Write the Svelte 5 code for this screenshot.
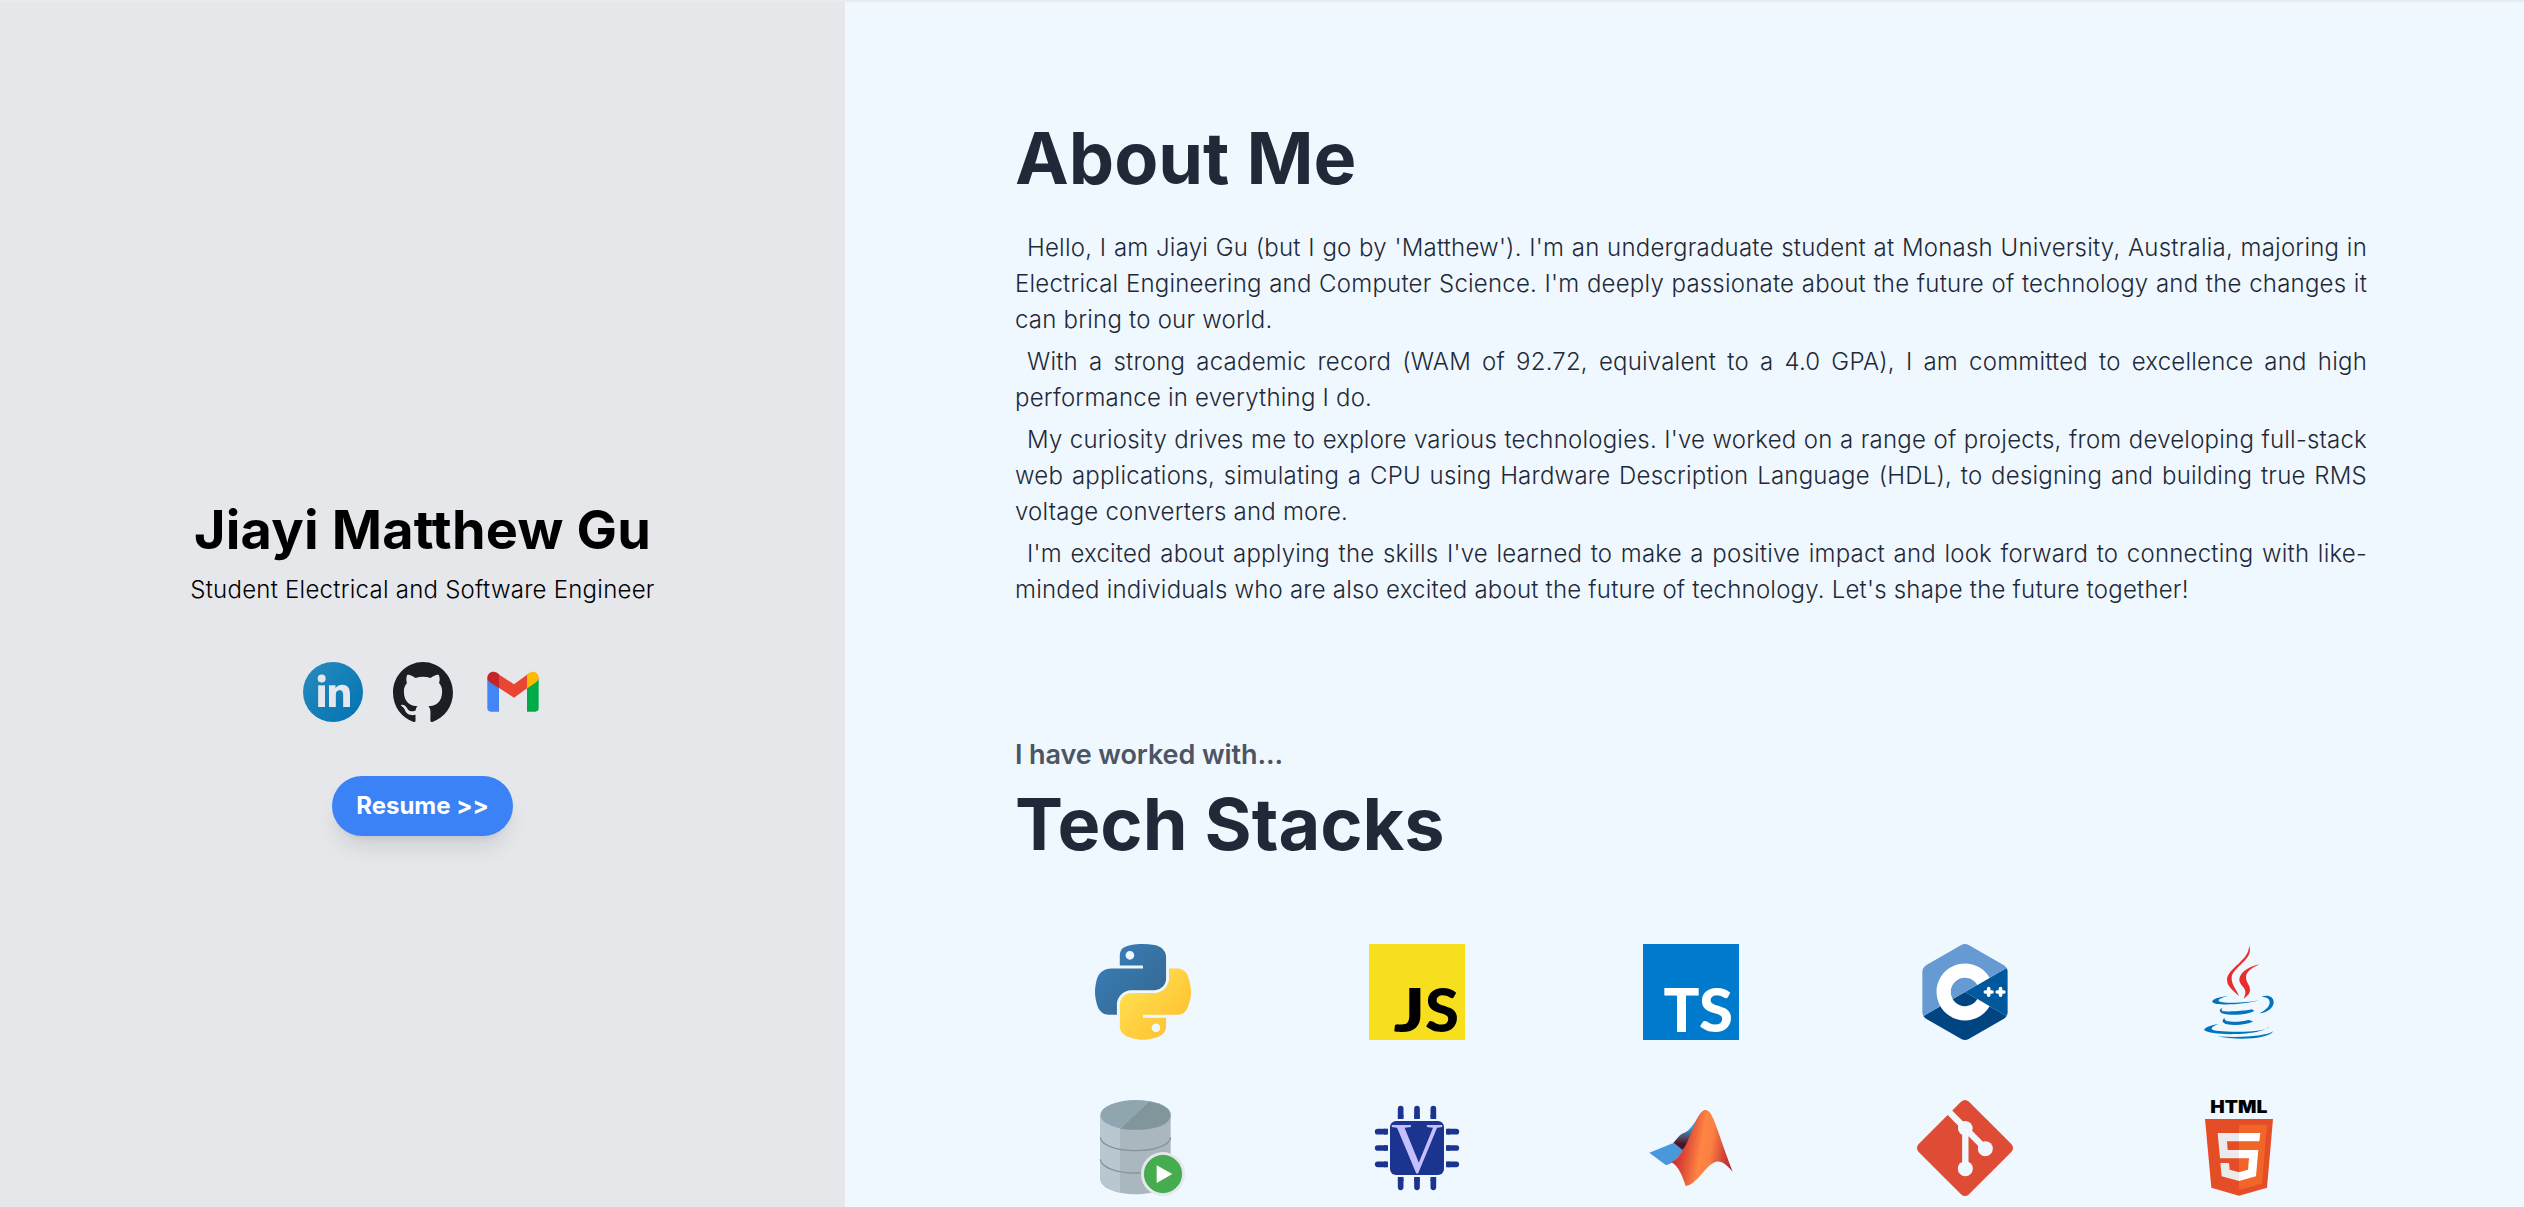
<script>
  const paragraphs = [
    "Hello, I am Jiayi Gu (but I go by 'Matthew'). I'm an undergraduate student at Monash University, Australia, majoring in Electrical Engineering and Computer Science. I'm deeply passionate about the future of technology and the changes it can bring to our world.",
    "With a strong academic record (WAM of 92.72, equivalent to a 4.0 GPA), I am committed to excellence and high performance in everything I do.",
    "My curiosity drives me to explore various technologies. I've worked on a range of projects, from developing full-stack web applications, simulating a CPU using Hardware Description Language (HDL), to designing and building true RMS voltage converters and more.",
    "I'm excited about applying the skills I've learned to make a positive impact and look forward to connecting with like-minded individuals who are also excited about the future of technology. Let's shape the future together!"
  ];
</script>

<div class="page">
  <aside class="profile">
    <h1>Jiayi Matthew Gu</h1>
    <p class="role">Student Electrical and Software Engineer</p>

    <nav class="socials">
      <!-- LinkedIn -->
      <svg viewBox="429 576 180 180">
        <defs>
          <linearGradient id="li" x1="0" y1="0" x2="1" y2="1">
            <stop offset="0.1" stop-color="#2489be" />
            <stop offset="0.9" stop-color="#0575b3" />
          </linearGradient>
        </defs>
        <circle cx="519" cy="666" r="90" fill="url(#li)" />
        <g fill="#e5e7eb">
          <circle cx="485" cy="625.500" r="12" />
          <path d="M474.500 646h20.500v65h-20.500z" />
          <path d="M507 646h19.500v9c4-7 11-11 20-11c18 0 23.500 12 23.500 29v38h-20.500v-34c0-8-1-16-10.500-16s-11.500 7-11.500 15v35H507z" />
        </g>
      </svg>
      <!-- GitHub -->
      <svg viewBox="0 0 97.7 96" preserveAspectRatio="none">
        <path fill="#1b1f23" d="M48.854 0C21.839 0 0 22 0 49.217c0 21.756 13.993 40.172 33.405 46.69 2.427.49 3.316-1.059 3.316-2.362 0-1.141-.08-5.052-.08-9.127-13.59 2.934-16.42-5.867-16.42-5.867-2.184-5.704-5.42-7.17-5.42-7.17-4.448-3.015.324-3.015.324-3.015 4.934.326 7.523 5.052 7.523 5.052 4.367 7.496 11.404 5.378 14.235 4.074.404-3.178 1.699-5.378 3.074-6.6-10.839-1.141-22.243-5.378-22.243-24.283 0-5.378 1.94-9.778 5.014-13.2-.485-1.222-2.184-6.275.486-13.038 0 0 4.125-1.304 13.426 5.052a46.97 46.97 0 0 1 12.214-1.63c4.125 0 8.33.571 12.213 1.63 9.302-6.356 13.427-5.052 13.427-5.052 2.67 6.763.97 11.816.485 13.038 3.155 3.422 5.015 7.822 5.015 13.2 0 18.905-11.404 23.06-22.324 24.283 1.78 1.548 3.316 4.481 3.316 9.126 0 6.6-.08 11.897-.08 13.526 0 1.304.89 2.853 3.316 2.364 19.412-6.52 33.405-24.935 33.405-46.691C97.707 22 75.788 0 48.854 0z" />
      </svg>
      <!-- Gmail -->
      <svg viewBox="969 576 180 180">
        <path fill="#4285f4" d="M982 624l35 30v71h-25c-6 0-10-4-10-10z" />
        <path fill="#00ac47" d="M1136 624l-35 30v71h25c6 0 10-4 10-10z" />
        <path fill="#ea4435" d="M1009 608l53 35 46-34-7 46-39 28-45-29-12-12z" />
        <path fill="#ffba00" d="M1101 615c7-7 12-9.500 18-9.500 10 0 17 8 17 18 0 5-2 9-8 13l-27 19z" />
        <path fill="#c52528" d="M1017 613c-6-5-11-7.500-17-7.500-10 0-18 8-18 18 0 5 2 9 8 13l27 18z" />
      </svg>
    </nav>

    <button class="resume">Resume &gt;&gt;</button>
  </aside>

  <main class="content">
    <section class="about">
      <h2>About Me</h2>
      <div class="bio">
        {#each paragraphs as text}
          <p>{text}</p>
        {/each}
      </div>
    </section>

    <section class="stacks">
      <p class="eyebrow">I have worked with...</p>
      <h2>Tech Stacks</h2>

      <div class="grid">
        <!-- Python -->
        <svg viewBox="12.8 1.98 102.4 103.8" preserveAspectRatio="none">
          <defs>
            <linearGradient id="pyb" x1="0" y1="0" x2="1" y2="1">
              <stop offset="0.1" stop-color="#387eb8" />
              <stop offset="0.85" stop-color="#366994" />
            </linearGradient>
            <linearGradient id="pyy" x1="0" y1="0" x2="1" y2="1">
              <stop offset="0.15" stop-color="#ffe052" />
              <stop offset="0.8" stop-color="#ffc331" />
            </linearGradient>
          </defs>
          <path fill="url(#pyb)" d="M63.391 1.988c-4.222.02-8.252.379-11.8 1.007-10.45 1.846-12.346 5.71-12.346 12.837v9.411h24.693v3.137H29.977c-7.176 0-13.46 4.313-15.426 12.521-2.268 9.405-2.368 15.275 0 25.096 1.755 7.311 5.947 12.519 13.124 12.519h8.491V67.234c0-8.151 7.051-15.34 15.426-15.34h24.665c6.866 0 12.346-5.654 12.346-12.548V15.833c0-6.693-5.646-11.72-12.346-12.837-4.244-.706-8.645-1.027-12.866-1.008zM50.037 9.557c2.55 0 4.634 2.117 4.634 4.721 0 2.593-2.083 4.69-4.634 4.69-2.56 0-4.633-2.097-4.633-4.69-.001-2.604 2.073-4.721 4.633-4.721z" />
          <path fill="url(#pyy)" d="M91.682 28.38v10.966c0 8.5-7.208 15.655-15.426 15.655H51.591c-6.756 0-12.346 5.783-12.346 12.549v23.515c0 6.691 5.818 10.628 12.346 12.547 7.816 2.297 15.312 2.713 24.665 0 6.216-1.801 12.346-5.423 12.346-12.547v-9.412H63.938v-3.138h37.012c7.176 0 9.852-5.005 12.348-12.519 2.578-7.735 2.467-15.174 0-25.096-1.774-7.145-5.161-12.521-12.348-12.521h-9.268zM77.809 87.927c2.561 0 4.634 2.097 4.634 4.692 0 2.602-2.074 4.719-4.634 4.719-2.55 0-4.633-2.117-4.633-4.719 0-2.595 2.083-4.692 4.633-4.692z" />
        </svg>

        <!-- JavaScript -->
        <svg viewBox="0 0 96 96">
          <rect width="96" height="96" fill="#f7df1e" />
          <text class="mark" x="24.500" y="88" textLength="32" lengthAdjust="spacingAndGlyphs">J</text>
          <text class="mark" x="56" y="88" textLength="34" lengthAdjust="spacingAndGlyphs">S</text>
        </svg>

        <!-- TypeScript -->
        <svg viewBox="0 0 96 96">
          <rect width="96" height="96" fill="#007acc" />
          <text class="mark light" x="20.500" y="88" textLength="36" lengthAdjust="spacingAndGlyphs">T</text>
          <text class="mark light" x="56" y="88" textLength="34" lengthAdjust="spacingAndGlyphs">S</text>
        </svg>

        <!-- C++ -->
        <svg viewBox="0 0 306 344.35">
          <path fill="#00599c" d="M302.107 258.262c2.401-4.159 3.893-8.845 3.893-13.053V99.14c0-4.208-1.49-8.893-3.892-13.052L153 172.175l149.107 86.087z" />
          <path fill="#004482" d="M166.25 341.193l126.5-73.034c3.644-2.104 6.956-5.737 9.357-9.897L153 172.175 3.893 258.263c2.401 4.159 5.714 7.793 9.357 9.896l126.5 73.034c7.287 4.208 19.213 4.208 26.5 0z" />
          <path fill="#659ad2" d="M302.108 86.087c-2.402-4.16-5.715-7.793-9.358-9.897L166.25 3.156c-7.287-4.208-19.213-4.208-26.5 0L13.25 76.19C5.962 80.397 0 90.725 0 99.14v146.069c0 4.208 1.491 8.894 3.893 13.053L153 172.175l149.108-86.088z" />
          <path fill="#fff" d="M153 274.175c-56.243 0-102-45.757-102-102s45.757-102 102-102c36.292 0 70.139 19.53 88.331 50.968l-44.143 25.544c-9.105-15.736-26.038-25.512-44.188-25.512-28.122 0-51 22.878-51 51 0 28.121 22.878 51 51 51 18.152 0 35.085-9.776 44.191-25.515l44.143 25.543c-18.192 31.441-52.04 50.972-88.334 50.972z" />
          <path stroke="#fff" stroke-width="13" stroke-linecap="round" d="M226 172h24M238 160v24M268.500 172h24M280.500 160v24" />
        </svg>

        <!-- Java -->
        <svg viewBox="93 42 288 288">
          <g fill="#e92d2e">
            <path d="M267 46C285 90 215 110 215 145C215 165 230 180 237 198C215 180 200 165 201 148C203 115 270 90 267 46z" />
            <path d="M300 103C270 115 258 128 258 142C258 158 270 165 270 180C270 192 260 200 251 206C258 190 258 182 250 172C242 162 237 155 238 147C241 125 270 108 300 103z" />
          </g>
          <g fill="#0074bd">
            <path d="M203 199C175 201 155 208 157 216C162 228 250 225 297 211C260 219 180 222 176 212C175 207 190 202 203 199z" />
            <path d="M305 200C325 193 342 202 341 218C339 236 320 247 299 250C318 240 330 228 329 216C328 204 318 201 305 200z" />
            <path d="M187 234C175 238 178 248 190 251C220 258 265 253 283 243L276 238C250 244 200 246 187 243C184 240 184 237 187 234z" />
            <path d="M195 264C183 270 187 279 200 283C225 288 260 285 280 274L265 270C245 276 215 277 200 273C195 270 192 268 195 264z" />
            <path d="M175 283C150 285 130 295 133 301C150 318 310 318 328 288C325 300 290 304 250 305C200 306 155 303 155 297C155 291 165 286 175 283z" />
            <path d="M172 319C230 332 325 328 340 304C320 318 240 325 172 319z" />
          </g>
        </svg>

        <!-- SQL database -->
        <svg viewBox="45 510 288 288">
          <path fill="#abb7bf" d="M61 555v193c0 25 47 45 105.500 45s105.500-20 105.500-45V555z" />
          <path fill="#b9c7d0" d="M61 555v193c0 16 24 31 59 38.500V560z" />
          <g fill="none" stroke="#80969b" stroke-width="4">
            <path d="M61 622c2 23 47 40 105.500 40s103.500-17 105.500-40" />
            <path d="M61 688c2 23 47 41 105.500 41s103.500-18 105.500-41" />
          </g>
          <ellipse cx="166.500" cy="555" rx="105.500" ry="45" fill="#8fa5b0" />
          <path fill="#80969b" stroke="#a3b4bb" stroke-width="1.500" d="M207 514L120 596C165 606 272 601 272 555C272 536 246 520 207 514z" />
          <circle cx="249" cy="732" r="66" fill="#e4e8ec" />
          <circle cx="249" cy="732" r="56" fill="#46ad4f" stroke="#2f9d43" stroke-width="2" />
          <path fill="#fff" d="M230 706l47 26-47 27z" />
        </svg>

        <!-- Verilog -->
        <svg viewBox="867 510 288 288">
          <g stroke="#1a348f" stroke-width="17" stroke-linecap="round">
            <path d="M962 536v22M1011 536v22M1060 536v22M962 750v22M1011 750v22M1060 750v22" />
            <path d="M893 605h22M893 654h22M893 703h22M1107 605h22M1107 654h22M1107 703h22" />
          </g>
          <path fill="#1a348f" d="M953.500 555h17v12h-17zM1002.500 555h17v12h-17zM1051.500 555h17v12h-17zM953.500 741h17v12h-17zM1002.500 741h17v12h-17zM1051.500 741h17v12h-17zM912 596.500h12v17h-12zM912 645.500h12v17h-12zM912 694.500h12v17h-12zM1098 596.500h12v17h-12zM1098 645.500h12v17h-12zM1098 694.500h12v17h-12z" />
          <rect x="930" y="573" width="162" height="162" rx="18" fill="#1a348f" />
          <text class="chip" x="933" y="725" textLength="156" lengthAdjust="spacingAndGlyphs">V</text>
        </svg>

        <!-- MATLAB -->
        <svg viewBox="69 510 288 288">
          <defs>
            <linearGradient id="mlo" x1="153" x2="338" y1="690" y2="720" gradientUnits="userSpaceOnUse">
              <stop offset="0" stop-color="#c9272f" />
              <stop offset="0.2" stop-color="#de4a35" />
              <stop offset="0.45" stop-color="#ff8543" />
              <stop offset="0.6" stop-color="#fb8042" />
              <stop offset="0.8" stop-color="#d84a35" />
              <stop offset="1" stop-color="#a81f30" />
            </linearGradient>
            <linearGradient id="mld" x1="0" x2="0" y1="560" y2="656" gradientUnits="userSpaceOnUse">
              <stop offset="0.35" stop-color="#25a0e0" />
              <stop offset="0.6" stop-color="#54566f" />
              <stop offset="0.85" stop-color="#4a1426" />
            </linearGradient>
          </defs>
          <path fill="#4799dc" d="M88 668L160 639L190 660C178 678 168 690 155 698Q145 705 137 705z" />
          <path fill="url(#mld)" d="M160 638C170 628 176 616 186 611C210 606 225 575 240 553C244 546 249 541 257 540L222 620L188 660z" />
          <path fill="url(#mlo)" d="M257 540C279 540 290 600 338 725C320 704 304 691 288 695C258 702 232 764 197 768C189 742 174 704 153 697C168 692 180 676 190 658C216 618 228 546 257 540z" />
        </svg>

        <!-- Git -->
        <svg viewBox="891 510 288 288">
          <path fill="#de4c36" d="M1023 515.500q12-11 24 0L1174 642q10.500 12 0 24L1047 792.500q-12 11-24 0L896 666q-10.500-12 0-24z" />
          <g fill="none" stroke="#f0f8ff" stroke-width="19">
            <path d="M970 528L1096 656M1036 595V716" />
          </g>
          <g fill="#f0f8ff">
            <circle cx="1036" cy="595" r="22" />
            <circle cx="1096" cy="656" r="22.500" />
            <circle cx="1036" cy="716" r="22.500" />
          </g>
        </svg>

        <!-- HTML5 -->
        <svg viewBox="93 510 288 288">
          <text class="html" x="151" y="549" textLength="171" lengthAdjust="spacingAndGlyphs">HTML</text>
          <path fill="#e44d26" d="M135 567H339L321 773L237 797L154 773z" />
          <path fill="#f16529" d="M237 584H321L306 761L237 780z" />
          <path fill="#ebebeb" d="M173 609H237V634H201L203 660H237V685H180zM181 699H207L209 719L237 727V753L185 739z" />
          <path fill="#fff" d="M237 609H301L298 634H237zM237 660H295L288 739L237 753V727L264 719L267 685H237z" />
        </svg>
      </div>
    </section>
  </main>
</div>

<style>
  :global(body) {
    margin: 0;
    overflow: hidden;
  }

  .page {
    box-sizing: border-box;
    display: flex;
    height: 1207px;
    overflow: hidden;
    border-top: 2px solid #e9ebef;
    background: #f0f8ff;
    font-family: Inter, "Liberation Sans", sans-serif;
  }

  h1,
  h2,
  p {
    margin: 0;
  }

  .profile {
    box-sizing: border-box;
    flex: none;
    display: flex;
    flex-direction: column;
    align-items: center;
    width: 845px;
    padding-top: 498px;
    background: #e5e7eb;
    color: #000;
  }

  h1 {
    font-size: 54px;
    line-height: 60px;
    font-weight: 700;
    letter-spacing: 0.2px;
  }

  .role {
    margin-top: 12px;
    font-size: 24px;
    line-height: 36px;
    font-weight: 300;
    letter-spacing: 0.24px;
  }

  .socials {
    display: flex;
    gap: 30px;
    margin-top: 54px;
  }

  .socials svg {
    width: 60px;
    height: 60px;
  }

  .resume {
    width: 181px;
    height: 60px;
    margin-top: 54px;
    padding: 0;
    border: 0;
    border-radius: 30px;
    background: #3b82f6;
    color: #fff;
    font: 700 24px/36px Inter, "Liberation Sans", sans-serif;
    box-shadow:
      0 15px 22.5px -4.5px rgb(0 0 0 / 0.1),
      0 6px 9px -6px rgb(0 0 0 / 0.1);
  }

  .content {
    flex: none;
    width: 1352px;
    padding: 120px 0 0 170px;
    color: #1f2937;
  }

  h2 {
    font-size: 72px;
    line-height: 72px;
    font-weight: 700;
  }

  .bio {
    display: flex;
    flex-direction: column;
    gap: 6px;
    margin-top: 36px;
    font-size: 24px;
    line-height: 36px;
    font-weight: 300;
    letter-spacing: 0.21px;
    text-align: justify;
  }

  .bio p {
    text-indent: 12px;
  }

  .stacks {
    margin-top: 126px;
  }

  .eyebrow {
    margin-bottom: 12px;
    color: #4b5563;
    font-size: 27px;
    line-height: 42px;
    font-weight: 600;
    letter-spacing: -0.09px;
  }

  .grid {
    display: grid;
    grid-template-columns: repeat(5, 1fr);
    justify-items: center;
    gap: 60px 18px;
    margin-top: 84px;
  }

  .grid svg {
    width: 96px;
    height: 96px;
    overflow: visible;
  }

  .mark {
    font: 900 61px Lato, sans-serif;
    fill: #000;
  }

  .mark.light {
    fill: #fff;
  }

  .chip {
    font: 218px "Liberation Serif", serif;
    fill: #c6bfff;
  }

  .html {
    font: 900 52px Inter, sans-serif;
    fill: #000;
  }
</style>
